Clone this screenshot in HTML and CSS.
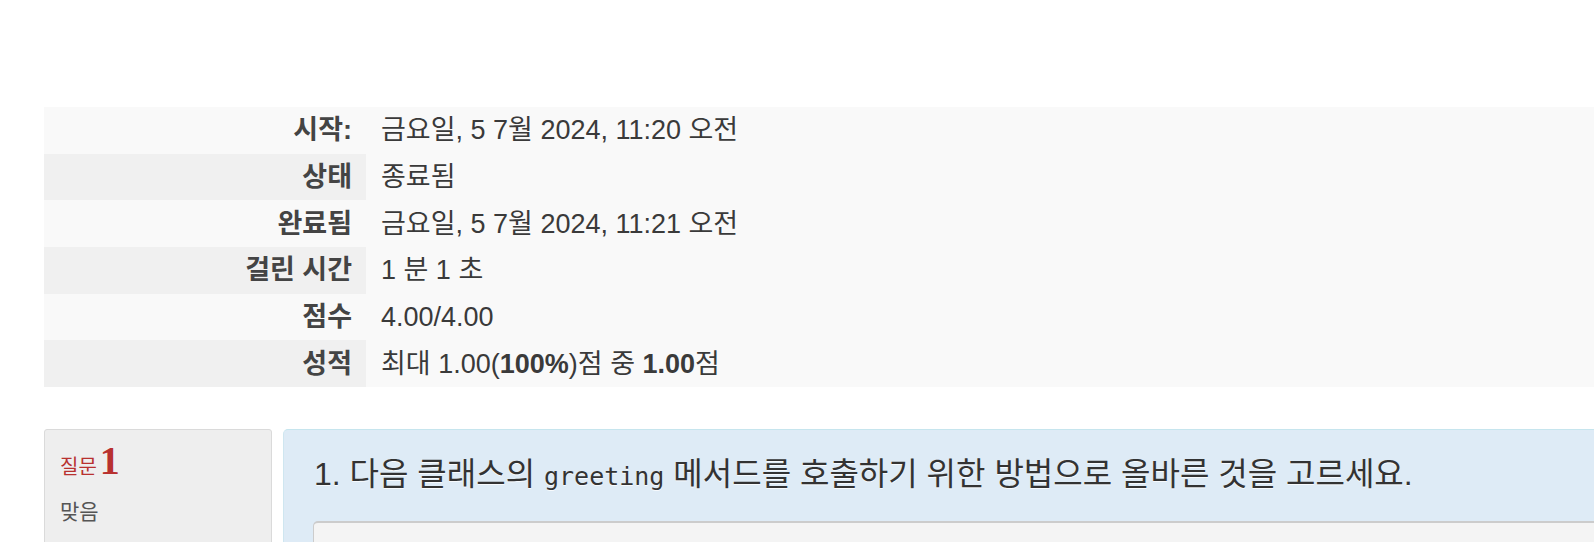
FILE: index.html
```html
<!DOCTYPE html>
<html lang="ko">
<head>
<meta charset="utf-8">
<title>퀴즈 검토</title>
<link rel="stylesheet" href="styles.css">
</head>
<body>
<div class="page">
  <table class="summary">
    <tbody>
      <tr><th>시작:</th><td>금요일, 5 7월 2024, 11:20 오전</td></tr>
      <tr><th>상태</th><td>종료됨</td></tr>
      <tr><th>완료됨</th><td>금요일, 5 7월 2024, 11:21 오전</td></tr>
      <tr><th>걸린 시간</th><td>1 분 1 초</td></tr>
      <tr><th>점수</th><td>4.00/4.00</td></tr>
      <tr><th>성적</th><td>최대 1.00(<b>100%</b>)점 중 <b>1.00</b>점</td></tr>
    </tbody>
  </table>

  <div class="que">
    <div class="info">
      <h3 class="no">질문<span class="qno">1</span></h3>
      <div class="state">맞음</div>
    </div>
    <div class="content">
      <div class="formulation">
        <div class="qtext">1. 다음 클래스의 <code class="mono">greeting</code> 메서드를 호출하기 위한 방법으로 올바른 것을 고르세요.</div>
        <div class="codebox"></div>
      </div>
    </div>
  </div>
</div>
</body>
</html>
```

FILE: styles.css
```css
html, body {
  margin: 0;
  padding: 0;
  background: #fff;
  overflow: hidden;
}

body {
  font-family: "Liberation Sans", "Noto Sans CJK KR", sans-serif;
  color: #3a3a3a;
}

.page {
  width: 1700px;
  padding: 107px 0 0 44px;
}

.summary {
  width: 1650px;
  border-collapse: collapse;
  margin: 0 0 42px 0;
}

.summary th,
.summary td {
  height: 46.67px;
  padding: 0;
  font-size: 27px;
  line-height: 30px;
  vertical-align: middle;
  background: #f9f9f9;
}

.summary th {
  width: 308px;
  padding-right: 14px;
  text-align: right;
  font-weight: bold;
  color: #444;
}

.summary td {
  padding-left: 15px;
  color: #3a3a3a;
}

.summary tr:nth-child(even) th {
  background: #f0f0f0;
}

.summary b {
  font-weight: bold;
}

.que {
  display: flex;
  gap: 11px;
  align-items: flex-start;
}

.info {
  flex: 0 0 auto;
  width: 228px;
  height: 200px;
  box-sizing: border-box;
  background: #eeeeee;
  border: 1px solid #dadada;
  border-radius: 3px;
  padding: 8px 15px;
}

.no {
  margin: 0;
  font-size: 20px;
  font-weight: normal;
  color: #b8312f;
  line-height: 46px;
}

.qno {
  font-family: "Liberation Serif", serif;
  font-size: 40px;
  font-weight: bold;
  margin-left: 3px;
}

.state {
  font-size: 21px;
  color: #555;
  margin-top: 8px;
  line-height: 28px;
}

.content {
  flex: 1 1 auto;
}

.formulation {
  background: #deebf6;
  border-top: 1px solid #c6e5ee;
  border-left: 1px solid #cfe6f0;
  border-radius: 5px 0 0 0;
  padding: 24px 0 0 29px;
  height: 200px;
}

.qtext {
  font-size: 32px;
  line-height: 40px;
  color: #333;
  text-shadow: 0 1px 0 rgba(255, 255, 255, 0.8);
  white-space: nowrap;
  padding-left: 1px;
}

.mono {
  font-family: "DejaVu Sans Mono", "Liberation Mono", monospace;
  font-size: 25px;
}

.codebox {
  margin-top: 24px;
  height: 120px;
  background: #f4f4f4;
  border-top: 2px solid #cccccc;
  border-left: 1px solid #cccccc;
  border-radius: 5px 0 0 0;
}
```
